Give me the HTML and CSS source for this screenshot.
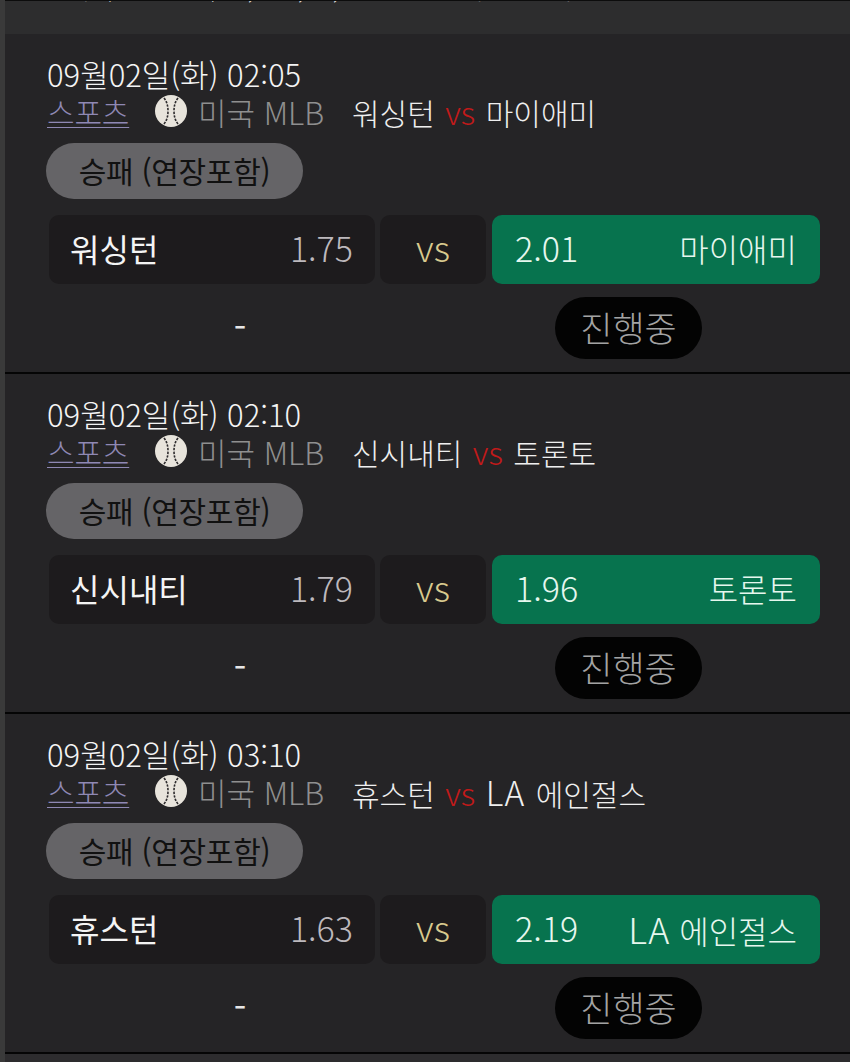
FILE: index.html
```html
<!doctype html>
<html lang="ko"><head><meta charset="UTF-8"><title>경기 목록</title><link rel="stylesheet" href="styles.css"></head>
<body>
  <div class="haut"><div class="coupe">승패 (연장포함) 1,000, 2,000 할 경기를 선택</div></div>

  <div class="carte">
    <div class="date">09월02일(화) 02:05</div>
    <div class="ligue">
      <a class="sport">스포츠</a>
      <svg class="balle" viewBox="0 0 32 32"><circle cx="16" cy="16" r="16" fill="#e8e4dc"/><path d="M9 3c3 4 4 8 4 13s-1 9-4 13M23 3c-3 4-4 8-4 13s1 9 4 13" fill="none" stroke="#2c2a2c" stroke-width="1.6" stroke-dasharray="2.4 1.2"/></svg>
      <span class="pays">미국 MLB</span>
      <span class="match">워싱턴 <em>vs</em> 마이애미</span>
    </div>
    <div class="type">승패 (연장포함)</div>
    <div class="cotes">
      <div class="equipe"><b>워싱턴</b><span>1.75</span></div>
      <div class="versus">vs</div>
      <div class="equipe choix"><span>2.01</span><b>마이애미</b></div>
    </div>
    <div class="pied"><div class="tiret">-</div><div class="zone-etat"><span class="etat">진행중</span></div></div>
  </div>

  <div class="carte">
    <div class="date">09월02일(화) 02:10</div>
    <div class="ligue">
      <a class="sport">스포츠</a>
      <svg class="balle" viewBox="0 0 32 32"><circle cx="16" cy="16" r="16" fill="#e8e4dc"/><path d="M9 3c3 4 4 8 4 13s-1 9-4 13M23 3c-3 4-4 8-4 13s1 9 4 13" fill="none" stroke="#2c2a2c" stroke-width="1.6" stroke-dasharray="2.4 1.2"/></svg>
      <span class="pays">미국 MLB</span>
      <span class="match">신시내티 <em>vs</em> 토론토</span>
    </div>
    <div class="type">승패 (연장포함)</div>
    <div class="cotes">
      <div class="equipe"><b>신시내티</b><span>1.79</span></div>
      <div class="versus">vs</div>
      <div class="equipe choix"><span>1.96</span><b>토론토</b></div>
    </div>
    <div class="pied"><div class="tiret">-</div><div class="zone-etat"><span class="etat">진행중</span></div></div>
  </div>

  <div class="carte">
    <div class="date">09월02일(화) 03:10</div>
    <div class="ligue">
      <a class="sport">스포츠</a>
      <svg class="balle" viewBox="0 0 32 32"><circle cx="16" cy="16" r="16" fill="#e8e4dc"/><path d="M9 3c3 4 4 8 4 13s-1 9-4 13M23 3c-3 4-4 8-4 13s1 9 4 13" fill="none" stroke="#2c2a2c" stroke-width="1.6" stroke-dasharray="2.4 1.2"/></svg>
      <span class="pays">미국 MLB</span>
      <span class="match">휴스턴 <em>vs</em> <i class="latin">LA</i> 에인절스</span>
    </div>
    <div class="type">승패 (연장포함)</div>
    <div class="cotes">
      <div class="equipe"><b>휴스턴</b><span>1.63</span></div>
      <div class="versus">vs</div>
      <div class="equipe choix"><span>2.19</span><b><i class="latin">LA</i> 에인절스</b></div>
    </div>
    <div class="pied"><div class="tiret">-</div><div class="zone-etat"><span class="etat">진행중</span></div></div>
  </div>
  <div class="reste"></div>
</body></html>
```

FILE: styles.css
```css
* {box-sizing: border-box;}
html,body {height:100%;}
body {margin:0;height:1062px;overflow:hidden;background:#3a3a3a;padding-left:5px;font-family:"Noto Sans CJK KR","Noto Sans",sans-serif;color:#f2f2f2;}
.haut {height:34px;background:#2d2d2e;border-top:1px solid #0c0c0c;overflow:hidden;}
.coupe {margin-top:-28px;padding-left:35px;font-size:27px;line-height:30px;font-weight:300;color:#ddd;white-space:nowrap;word-spacing:6px;}
.carte {height:340px;background:#252426;border-bottom:2px solid #050505;padding-top:22px;}
.date {margin-left:42px;font-size:31px;line-height:35px;font-weight:300;color:#f4f4f4;}
.ligue {display:flex;align-items:center;height:40px;margin-left:42px;font-size:30px;font-weight:300;}
.sport {color:#8f88b4;text-decoration:underline;text-underline-offset:3px;text-decoration-thickness:1px;width:108px;letter-spacing:-0.2px;}
.balle {width:32px;height:32px;flex:none;}
.pays {margin-left:11px;color:#8f8f8f;width:154px;white-space:nowrap;font-size:31px;}
.match {color:#efefef;white-space:nowrap;word-spacing:2px;}
.match em {font-style:normal;color:#c21a1a;font-size:32px;}
.latin {font-style:normal;font-size:1.12em;letter-spacing:1px;}
.type {display:flex;align-items:center;justify-content:center;width:257px;height:56px;margin:12px 0 0 41px;border-radius:28px;background:#656467;color:#111;font-size:30px;letter-spacing:-0.3px;padding-bottom:2px;}
.cotes {display:flex;gap:5px;height:69px;margin:16px 30px 0 44px;}
.equipe {flex:1;display:flex;align-items:center;justify-content:space-between;padding:0 22px 4px 21px;background:#1d1b1d;border-radius:10px;font-size:32px;}
.equipe b {font-weight:400;color:#f4f4f4;}
.equipe span {color:#bdb9bd;font-weight:300;font-size:34px;}
.versus {width:106px;flex:none;display:flex;align-items:center;justify-content:center;padding-bottom:8px;background:#1d1b1d;border-radius:10px;color:#d8c98e;font-size:36px;font-weight:300;}
.choix {flex:none;width:328px;background:#07734e;padding:0 23px 4px;margin-left:1px;}
.choix span,.choix b {color:#e6f7ee;font-weight:300;}
.pied {display:flex;align-items:center;height:62px;margin-top:13px;}
.tiret {width:470px;text-align:center;font-size:36px;color:#e6e6e6;padding-bottom:6px;}
.zone-etat {width:147px;margin-left:80px;}
.etat {display:flex;align-items:center;justify-content:center;height:62px;border-radius:31px;background:#030303;color:#a3a3a3;font-size:35px;font-weight:300;padding-bottom:4px;}
.reste {height:40px;background:#2d2c2e;}
```
